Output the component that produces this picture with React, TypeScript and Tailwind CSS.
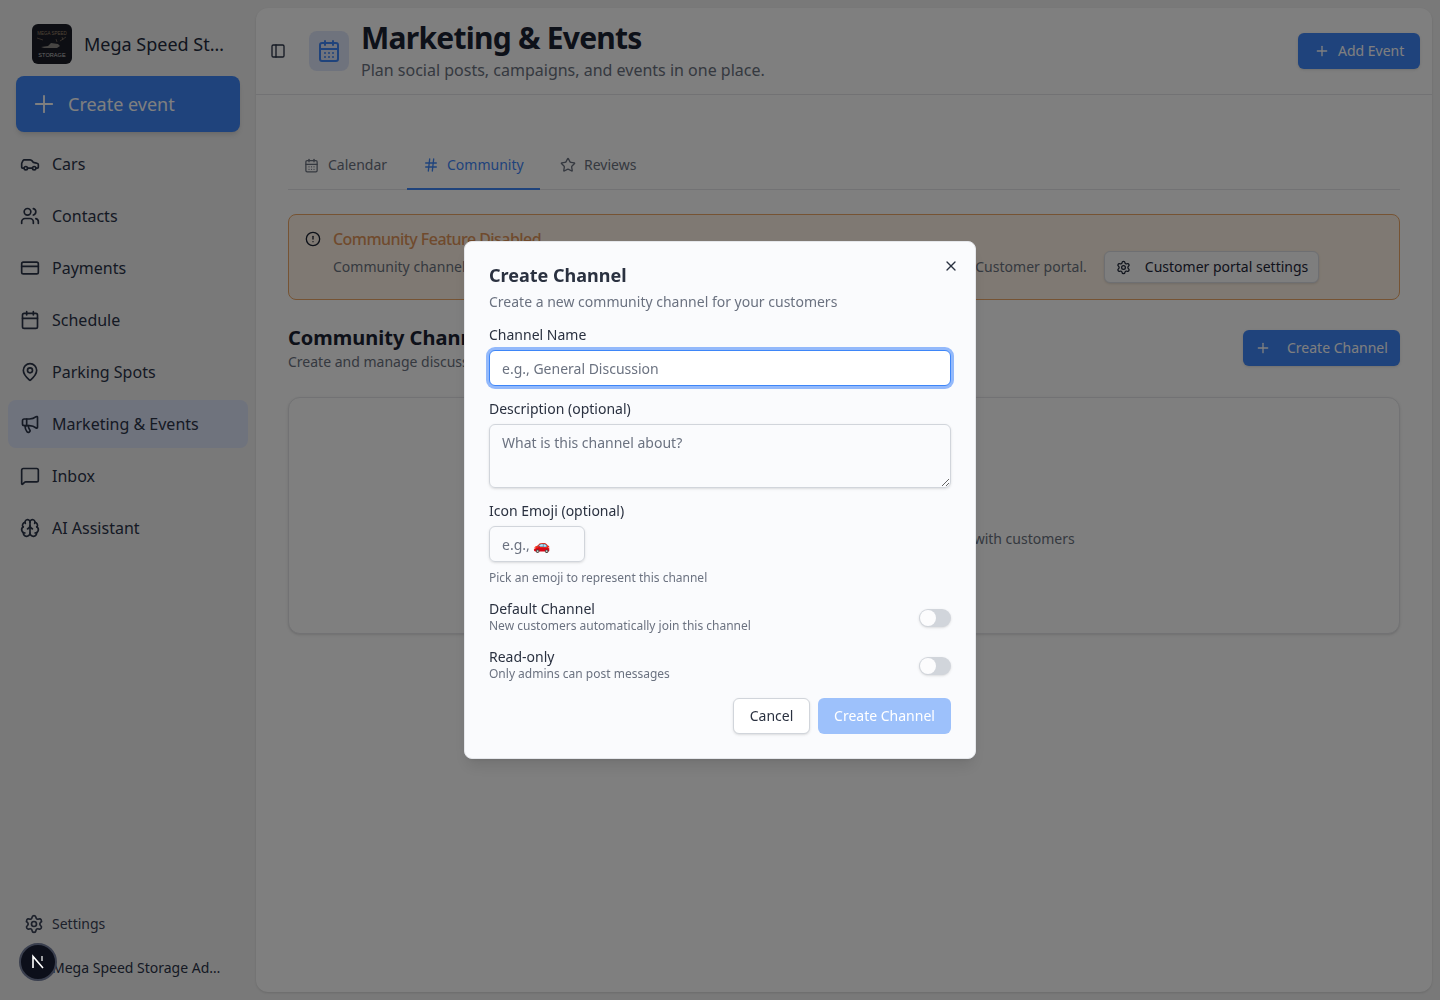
import React from "react";
import {
  PanelLeft, CalendarDays, Calendar, Plus, Car, Users, CreditCard, MapPin, Megaphone,
  MessageSquare, Brain, Settings, Hash, Star, CircleAlert, X,
} from "lucide-react";

const nav = [
  { label: "Cars", Icon: Car },
  { label: "Contacts", Icon: Users },
  { label: "Payments", Icon: CreditCard },
  { label: "Schedule", Icon: Calendar },
  { label: "Parking Spots", Icon: MapPin },
  { label: "Marketing & Events", Icon: Megaphone, active: true },
  { label: "Inbox", Icon: MessageSquare },
  { label: "AI Assistant", Icon: Brain },
];

function Logo() {
  return (
    <svg viewBox="0 0 40 40" className="h-10 w-10 shrink-0 rounded-md bg-[#1a1c26]">
      <text x="20" y="11" textAnchor="middle" fontSize="4.5" fill="#a08a70" fontFamily="Liberation Sans">MEGA SPEED</text>
      <path d="M5 14l6 2M28 17l6-4M30 13l1 3M24 15l1 3" stroke="#a08a70" strokeWidth="0.6" fill="none" />
      <path d="M9 23l7-1 3-3 7 1 2 2-3 2H12z" fill="#8e8a86" />
      <text x="20" y="33" textAnchor="middle" fontSize="5.6" fill="#c8c8c8" fontFamily="Liberation Sans">STORAGE</text>
    </svg>
  );
}

function Sidebar() {
  return (
    <aside className="flex w-64 shrink-0 flex-col">
      <div className="flex items-center gap-3 pl-8 pt-6">
        <Logo />
        <span className="w-[146px] truncate text-lg text-[#222a3d]">Mega Speed Storage</span>
      </div>
      <div className="px-4 pt-3">
        <button className="flex h-14 w-full items-center gap-[10px] rounded-lg bg-[#3e86f8] pl-[14px] text-lg text-white shadow-md">
          <Plus size={28} strokeWidth={1.6} />
          <span>Create event</span>
        </button>
      </div>
      <nav className="flex flex-col gap-1 px-2 pt-2">
        {nav.map(({ label, Icon, active }) => (
          <div
            key={label}
            className={`flex h-12 items-center gap-[12px] rounded-lg pl-3 text-base text-[#2b3448] ${active ? "bg-[#dfe6fb]" : ""}`}
          >
            <Icon size={20} strokeWidth={2} />
            <span>{label}</span>
          </div>
        ))}
      </nav>
      <div className="mt-auto flex flex-col pb-[22px]">
        <div className="flex items-center gap-2 pl-6 text-sm text-[#3a4256]">
          <Settings size={20} />
          <span>Settings</span>
        </div>
        <div className="pl-[52px] pt-6 text-sm text-[#2b3448]">
          <span className="block w-[172px] truncate">Mega Speed Storage Admin Team</span>
        </div>
      </div>
    </aside>
  );
}

function Header() {
  return (
    <header className="flex h-[87px] shrink-0 items-center border-b border-[#e4e5e8] pl-[14px] pr-3">
      <PanelLeft size={16} className="text-[#2b3448]" />
      <div className="ml-[23px] flex h-10 w-10 items-center justify-center rounded-lg bg-[#dfe6fb]">
        <CalendarDays size={24} className="text-[#3e86f8]" />
      </div>
      <div className="ml-3 flex flex-col">
        <h1 className="text-3xl leading-9 font-bold tracking-tight text-[#1b2232]">Marketing &amp; Events</h1>
        <p className="mt-[2px] text-base leading-6 text-[#6b7280]">Plan social posts, campaigns, and events in one place.</p>
      </div>
      <button className="ml-auto flex h-9 w-[122px] items-center gap-2 rounded-md bg-[#3e86f8] pl-4 text-sm text-white shadow-sm">
        <Plus size={16} />
        Add Event
      </button>
    </header>
  );
}

function Tabs() {
  return (
    <div className="flex h-[47px] items-stretch border-b border-[#e4e5e8] pb-[2px] text-sm">
      <div className="flex w-[119px] items-center gap-[9px] pl-4 text-[#6b7280]">
        <CalendarDays size={15} />
        Calendar
      </div>
      <div className="-mb-[3px] flex w-[133px] items-center gap-2 border-b-2 border-[#3e86f8] pb-[1px] pl-4 text-[#3e86f8]">
        <Hash size={16} />
        Community
      </div>
      <div className="flex items-center gap-2 pl-5 text-[#6b7280]">
        <Star size={16} />
        Reviews
      </div>
    </div>
  );
}

function Banner() {
  return (
    <div className="mt-6 flex h-[86px] gap-3 rounded-lg border border-[#eda766] bg-[#fff3e6] pl-4 pt-3">
      <CircleAlert size={16} className="mt-[4px] shrink-0 text-[#1b2232]" />
      <div className="min-w-0">
        <div className="text-base font-medium tracking-[-0.55px] text-[#e0955a]">Community Feature Disabled</div>
        <div className="flex items-center gap-[17px] text-sm text-[#6b7280]">
          <span className="whitespace-nowrap tracking-[0.018px]">Community channels are hidden right now. Enable the community option in settings to show it in Customer portal.</span>
          <button className="flex h-8 w-[215px] shrink-0 items-center gap-[14px] rounded-md border border-[#dcdfe4] bg-[#fcfcfd] pl-[11px] text-[#1f2738] shadow-sm">
            <Settings size={15} />
            Customer portal settings
          </button>
        </div>
      </div>
    </div>
  );
}

function ChannelsSection() {
  return (
    <>
      <div className="mt-6 flex items-start justify-between">
        <div>
          <h2 className="text-xl leading-7 font-bold text-[#1b2232]">Community Channels</h2>
          <p className="text-sm leading-5 text-[#6b7280]">Create and manage discussion channels</p>
        </div>
        <button className="mt-[6px] flex h-9 w-[157px] items-center gap-4 rounded-md bg-[#3e86f8] pl-3 text-sm text-white shadow-sm">
          <Plus size={16} />
          Create Channel
        </button>
      </div>
      <div className="mt-[25px] flex h-[237px] flex-col items-center justify-center rounded-xl border border-[#e4e5e8] bg-white pt-[46px] text-sm shadow-sm">
        <p className="text-[#6b7280]">Create your first channel to start having conversations with customers</p>
      </div>
    </>
  );
}

function Field({ children }: { children: React.ReactNode }) {
  return <label className="block text-sm leading-5 text-[#2a3140]">{children}</label>;
}

function Toggle() {
  return (
    <span className="mt-px flex h-[18px] w-8 items-center rounded-full bg-[#d1d5db] p-px shadow-sm">
      <span className="h-4 w-4 rounded-full bg-[#fcfcfd]" />
    </span>
  );
}

function Dialog() {
  return (
    <div className="fixed inset-0 flex items-center justify-center bg-black/50">
      <div className="relative h-[518px] w-[512px] rounded-lg border border-[#e5e7eb] bg-[#fafbfd] p-6 shadow-lg">
        <button className="absolute right-4 top-4 text-[#2a3140]">
          <X size={16} />
        </button>
        <h3 className="text-lg leading-[18px] font-bold text-[#2a3140]">Create Channel</h3>
        <p className="mt-2 text-sm leading-5 text-[#6b7280]">Create a new community channel for your customers</p>
        <div className="mt-[13px]">
          <Field>Channel Name</Field>
          <input
            placeholder="e.g., General Discussion"
            className="mt-[5px] h-9 w-full rounded-md border border-[#3e86f8] bg-white px-3 text-sm text-[#2a3140] shadow-sm ring-[3px] ring-[#93b9fb] outline-none placeholder:text-[#6b7280]"
          />
        </div>
        <div className="mt-[13px]">
          <Field>Description (optional)</Field>
          <textarea
            placeholder="What is this channel about?"
            className="mt-[5px] block h-16 w-full rounded-md border border-[#d1d5db] px-3 py-2 text-sm text-[#2a3140] shadow-sm outline-none placeholder:text-[#6b7280]"
          />
        </div>
        <div className="mt-[13px]">
          <Field>Icon Emoji (optional)</Field>
          <input
            placeholder="e.g., 🚗"
            className="mt-[5px] block h-9 w-24 rounded-md border border-[#d1d5db] px-3 text-sm shadow-sm outline-none placeholder:text-[#6b7280]"
          />
          <p className="mt-2 text-xs leading-4 text-[#6b7280]">Pick an emoji to represent this channel</p>
        </div>
        <div className="mt-[15px] flex items-center justify-between">
          <div>
            <div className="text-sm leading-4 text-[#2a3140]">Default Channel</div>
            <div className="mt-px text-xs leading-4 text-[#6b7280]">New customers automatically join this channel</div>
          </div>
          <Toggle />
        </div>
        <div className="mt-[15px] flex items-center justify-between">
          <div>
            <div className="text-sm leading-4 text-[#2a3140]">Read-only</div>
            <div className="mt-px text-xs leading-4 text-[#6b7280]">Only admins can post messages</div>
          </div>
          <Toggle />
        </div>
        <div className="mt-4 flex justify-end gap-2">
          <button className="h-9 w-[77px] rounded-md border border-[#d1d5db] bg-white text-sm text-[#2a3140] shadow-sm">Cancel</button>
          <button className="h-9 w-[133px] rounded-md bg-[#9dc1fb] text-sm text-white">Create Channel</button>
        </div>
      </div>
    </div>
  );
}

function DevBadge() {
  return (
    <div className="fixed bottom-[19px] left-[19px] flex h-[38px] w-[38px] items-center justify-center rounded-full border-2 border-[#3a3f4e] bg-[#0c0f1a]">
      <svg viewBox="0 0 16 16" className="h-4 w-4" fill="none" stroke="#fff" strokeWidth="1.6">
        <path d="M3 14V2.5L13 14" />
        <path d="M12 2v5" strokeWidth="1.2" />
      </svg>
    </div>
  );
}

export default function App() {
  return (
    <div className="flex h-screen w-full overflow-hidden bg-[#f3f3f3] font-['Noto_Sans',sans-serif]">
      <Sidebar />
      <main className="my-2 mr-2 flex min-w-0 flex-1 flex-col rounded-xl bg-[#fefefe] shadow-sm">
        <Header />
        <div className="px-8 pt-[48px]">
          <Tabs />
          <Banner />
          <ChannelsSection />
        </div>
      </main>
      <Dialog />
      <DevBadge />
    </div>
  );
}
